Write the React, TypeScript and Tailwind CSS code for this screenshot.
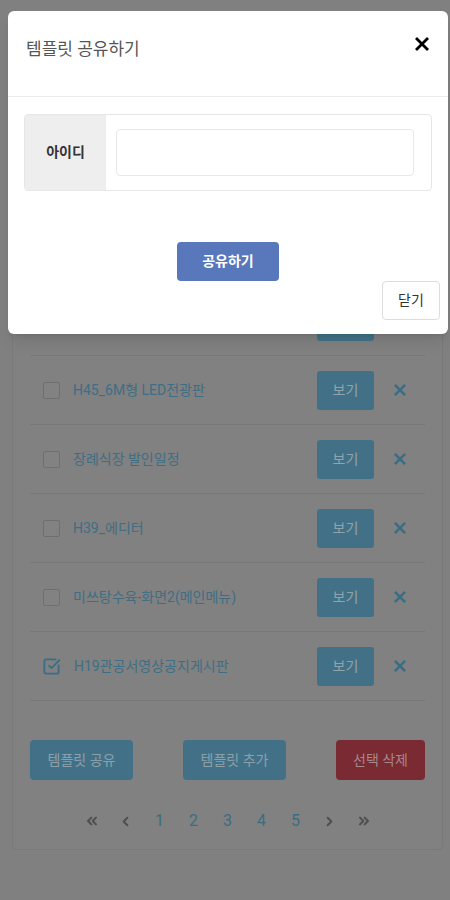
import { ChevronLeft, ChevronRight, ChevronsLeft, ChevronsRight, SquareCheckBig } from 'lucide-react';

const rows = [
  { name: 'H52_메뉴판', checked: false },
  { name: 'H50_대기순번', checked: false },
  { name: 'H48_행사안내', checked: false },
  { name: 'H46_공지사항', checked: false },
  { name: 'H45_6M형 LED전광판', checked: false },
  { name: '장례식장 발인일정', checked: false },
  { name: 'H39_에디터', checked: false },
  { name: '미쓰탕수육-화면2(메인메뉴)', checked: false },
  { name: 'H19관공서영상공지게시판', checked: true },
];

const pages = ['1', '2', '3', '4', '5'];

function CloseIcon({ className }: { className?: string }) {
  return (
    <svg viewBox="0 0 14 14" className={className} fill="none" stroke="currentColor" strokeLinecap="square">
      <path d="M2 2 L12 12 M12 2 L2 12" strokeWidth="2.8" />
    </svg>
  );
}

function TemplateRow({ name, checked }: { name: string; checked: boolean }) {
  return (
    <div className="flex h-[69px] items-center border-b border-[#787878] pl-[13px] pr-[19px]">
      {checked ? (
        <SquareCheckBig className="h-[19px] w-[19px] -ml-[1px] text-[#3b6e86]" strokeWidth={2.4} />
      ) : (
        <span className="h-[17px] w-[17px] rounded-[2px] border border-[#6f6f6f] bg-[#828282]" />
      )}
      <span className="ml-[13px] text-[14px] text-[#3f6e84]">{name}</span>
      <button className="ml-auto h-[39px] w-[57px] rounded-[3px] bg-[#427187] text-[14px] text-[#8fa3ad]">
        보기
      </button>
      <CloseIcon className="ml-[20px] h-[12px] w-[12px] text-[#386d86]" />
    </div>
  );
}

export default function App() {
  return (
    <div
      className="relative h-[900px] w-[450px] overflow-hidden bg-[#808080]"
      style={{ fontFamily: "Roboto, 'Noto Sans CJK KR', sans-serif" }}
    >
      {/* page behind the dialog */}
      <div className="ml-3 mt-[14px] w-[431px] rounded-[4px] border border-[#7a7a7a] bg-[#818181] px-[17px] pb-[18px] pt-[65px]">
        <div>
          {rows.map((r) => (
            <TemplateRow key={r.name} name={r.name} checked={r.checked} />
          ))}
        </div>

        <div className="mt-[39px] flex items-center justify-between">
          <button className="h-[40px] w-[103px] rounded-[4px] bg-[#427187] text-[14px] text-[#8ca0aa]">
            템플릿 공유
          </button>
          <button className="h-[40px] w-[103px] rounded-[4px] bg-[#427187] text-[14px] text-[#8ca0aa]">
            템플릿 추가
          </button>
          <button className="h-[40px] w-[89px] rounded-[4px] bg-[#7a2a32] text-[14px] text-[#a8878b]">
            선택 삭제
          </button>
        </div>

        <div className="mt-[31px] flex h-5 items-center justify-center">
          <span className="flex w-[34px] justify-center text-[#4e4e4e]">
            <ChevronsLeft className="h-[16px] w-[16px]" strokeWidth={3} />
          </span>
          <span className="flex w-[34px] justify-center text-[#4e4e4e]">
            <ChevronLeft className="h-[15px] w-[15px]" strokeWidth={3} />
          </span>
          {pages.map((p) => (
            <span key={p} className="flex w-[34px] justify-center text-[16px] text-[#3b6d82]">
              {p}
            </span>
          ))}
          <span className="flex w-[34px] justify-center text-[#4e4e4e]">
            <ChevronRight className="h-[15px] w-[15px]" strokeWidth={3} />
          </span>
          <span className="flex w-[34px] justify-center text-[#4e4e4e]">
            <ChevronsRight className="h-[16px] w-[16px]" strokeWidth={3} />
          </span>
        </div>
      </div>

      {/* share dialog */}
      <div className="absolute left-2 top-[11px] w-[440px] rounded-[6px] bg-white shadow-lg">
        <div className="flex h-[86px] items-start justify-between border-b border-[#ececec] pl-[18px] pr-[19px] pt-[27px]">
          <h2 className="text-[17px] leading-[22px] text-[#555]">템플릿 공유하기</h2>
          <button aria-label="close" className="mt-[-1px] text-black">
            <CloseIcon className="h-[14px] w-[14px]" />
          </button>
        </div>

        <div className="px-4 pt-[17px]">
          <div className="flex h-[77px] overflow-hidden rounded-[4px] border border-[#e6e6e6]">
            <div className="flex w-[81px] items-center justify-center bg-[#eeeeee] text-[14px] font-bold text-[#333]">
              아이디
            </div>
            <div className="flex flex-1 items-center pl-[10px] pr-[17px]">
              <input className="h-[47px] w-full rounded-[4px] border border-[#e8e8e8] bg-white outline-none" />
            </div>
          </div>

          <div className="mt-[51px] flex justify-center">
            <button className="h-[39px] w-[102px] rounded-[4px] bg-[#5878bb] text-[14px] font-bold text-white">
              공유하기
            </button>
          </div>
        </div>

        <div className="flex justify-end pb-[14px] pr-2">
          <button className="h-[39px] w-[58px] rounded-[4px] border border-[#dddddd] bg-white text-[14px] text-[#333]">
            닫기
          </button>
        </div>
      </div>
    </div>
  );
}
